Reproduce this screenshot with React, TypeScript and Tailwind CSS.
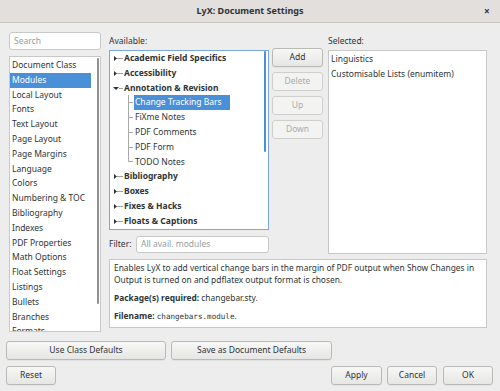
import React from "react";

const categories = [
  "Document Class",
  "Modules",
  "Local Layout",
  "Fonts",
  "Text Layout",
  "Page Layout",
  "Page Margins",
  "Language",
  "Colors",
  "Numbering & TOC",
  "Bibliography",
  "Indexes",
  "PDF Properties",
  "Math Options",
  "Float Settings",
  "Listings",
  "Bullets",
  "Branches",
  "Formats",
];

type TreeRow = { label: string; kind: "closed" | "open" | "child"; last?: boolean; selected?: boolean };

const tree: TreeRow[] = [
  { label: "Academic Field Specifics", kind: "closed" },
  { label: "Accessibility", kind: "closed" },
  { label: "Annotation & Revision", kind: "open" },
  { label: "Change Tracking Bars", kind: "child", selected: true },
  { label: "FiXme Notes", kind: "child" },
  { label: "PDF Comments", kind: "child" },
  { label: "PDF Form", kind: "child" },
  { label: "TODO Notes", kind: "child", last: true },
  { label: "Bibliography", kind: "closed" },
  { label: "Boxes", kind: "closed" },
  { label: "Fixes & Hacks", kind: "closed" },
  { label: "Floats & Captions", kind: "closed" },
];

function Btn({
  children,
  disabled,
  className = "",
}: {
  children: React.ReactNode;
  disabled?: boolean;
  className?: string;
}) {
  return (
    <div
      className={
        "flex items-center justify-center whitespace-nowrap rounded-[3px] border " +
        (disabled
          ? "border-[#cfcfcd] bg-[#f3f3f2] text-[#a9abab] "
          : "border-[#b9b9b6] bg-gradient-to-b from-[#f7f7f6] to-[#e6e6e4] text-[#2e3436] shadow-[0_1px_0_rgba(0,0,0,0.04)] ") +
        className
      }
    >
      {children}
    </div>
  );
}

function Expander({ open }: { open: boolean }) {
  return (
    <svg width="14" height="15" className="shrink-0">
      {open ? (
        <polygon points="3,6 9,6 6,9" fill="#2e3436" />
      ) : (
        <polygon points="4,5 7,7.5 4,10" fill="#2e3436" />
      )}
      <line x1={open ? 9 : 7} y1="7.5" x2="13" y2="7.5" stroke="#a0a0a0" />
    </svg>
  );
}

function Branch({ last }: { last?: boolean }) {
  return (
    <svg width="24" height="15" className="shrink-0">
      <line x1="18.5" y1="0" x2="18.5" y2={last ? 7.5 : 15} stroke="#a8a8a8" />
      <line x1="18.5" y1="7.5" x2="23" y2="7.5" stroke="#a8a8a8" />
    </svg>
  );
}

export default function App() {
  return (
    <div className="flex h-[391px] w-[500px] flex-col overflow-hidden bg-[#ededed] font-['Noto_Sans','Liberation_Sans',sans-serif] text-[8.5px] text-[#2e3436]">
      {/* title bar */}
      <div className="flex h-[23px] shrink-0 items-center border-b border-[#c9c5c0] bg-[#e2dfdc] pl-[16px] pr-[8px]">
        <div className="flex-1 text-center text-[9px] font-bold">LyX: Document Settings</div>
        <div className="w-[8px] text-[10px] font-bold leading-none">×</div>
      </div>

      <div className="flex pl-[9px] pt-[9px]">
        {/* left column */}
        <div className="flex w-[92px] flex-col gap-[6px]">
          <div className="flex h-[18px] items-center rounded-[3px] border border-[#c8c8c6] bg-white px-[4px] text-[#9a9c9c]">
            Search
          </div>
          <div className="flex h-[276px] border border-[#c8c8c6] bg-white">
            <div className="flex-1 overflow-hidden whitespace-nowrap pt-[1px]">
              {categories.map((c, i) => (
                <div
                  key={c}
                  className={
                    "flex h-[14.8px] items-center px-[2px] " +
                    (i === 1 ? "bg-[#4a90d9] text-white" : "")
                  }
                >
                  {c}
                </div>
              ))}
            </div>
            <div className="flex w-[9px] justify-end pr-[1px] pt-[1px]">
              <div className="h-[246px] w-[2px] rounded-full bg-[#8e9091]" />
            </div>
          </div>
        </div>

        {/* right area */}
        <div className="ml-[8px] flex w-[378px] flex-col">
          <div className="flex">
            {/* available */}
            <div className="flex w-[160px] flex-col">
              <div className="flex h-[18px] items-center">Available:</div>
              <div className="flex h-[180px] border border-[#7aa7dc] bg-white">
                <div className="flex-1 overflow-hidden whitespace-nowrap">
                  {tree.map((r) =>
                    r.kind === "child" ? (
                      <div key={r.label} className="flex h-[14.8px] items-center">
                        <Branch last={r.last} />
                        <div
                          className={
                            "flex h-full w-[96px] items-center px-[1px] " +
                            (r.selected ? "bg-[#4a90d9] text-white" : "")
                          }
                        >
                          {r.label}
                        </div>
                      </div>
                    ) : (
                      <div key={r.label} className="flex h-[14.8px] items-center font-bold">
                        <Expander open={r.kind === "open"} />
                        <span>{r.label}</span>
                      </div>
                    )
                  )}
                </div>
                <div className="flex w-[4px] justify-start">
                  <div className="h-[101px] w-[2px] rounded-full bg-[#4a90d9]" />
                </div>
              </div>
              <div className="mt-[6px] flex h-[17px] items-center">
                <span className="w-[27px]">Filter:</span>
                <div className="flex h-full flex-1 items-center rounded-[3px] border border-[#c8c8c6] bg-white px-[4px] text-[#9a9c9c]">
                  All avail. modules
                </div>
              </div>
            </div>

            {/* buttons */}
            <div className="ml-[3px] mt-[16px] flex w-[51px] flex-col gap-[5px]">
              <Btn className="h-[19px]">Add</Btn>
              <Btn disabled className="h-[19px]">Delete</Btn>
              <Btn disabled className="h-[19px]">Up</Btn>
              <Btn disabled className="h-[19px]">Down</Btn>
            </div>

            {/* selected */}
            <div className="ml-[5px] flex w-[159px] flex-col">
              <div className="flex h-[18px] items-center">Selected:</div>
              <div className="h-[204px] whitespace-nowrap border border-[#c8c8c6] bg-white px-[2px] pt-[1px]">
                <div className="flex h-[14.8px] items-center">Linguistics</div>
                <div className="flex h-[14.8px] items-center">Customisable Lists (enumitem)</div>
              </div>
            </div>
          </div>

          {/* description */}
          <div className="mt-[5px] h-[69px] whitespace-nowrap border border-[#c8c8c6] bg-white px-[4px] pt-[2px] text-[8.4px] leading-[12px]">
            <p className="mb-[6px]">
              Enables LyX to add vertical change bars in the margin of PDF output when Show Changes in
              <br />
              Output is turned on and pdflatex output format is chosen.
            </p>
            <p className="mb-[6px]">
              <b>Package(s) required:</b> changebar.sty.
            </p>
            <p>
              <b>Filename:</b>{" "}
              <span className="font-['DejaVu_Sans_Mono',monospace] text-[7.6px]">changebars.module</span>.
            </p>
          </div>
        </div>
      </div>

      {/* bottom buttons */}
      <div className="mt-[9px] flex gap-[5px] pl-[6px]">
        <Btn className="h-[19px] w-[160px]">Use Class Defaults</Btn>
        <Btn className="h-[19px] w-[161px]">Save as Document Defaults</Btn>
      </div>
      <div className="mt-[6px] flex items-center pl-[6px] pr-[7px]">
        <Btn className="h-[19px] w-[50px]">Reset</Btn>
        <div className="flex-1" />
        <Btn className="h-[19px] w-[51px]">Apply</Btn>
        <Btn className="ml-[5px] h-[19px] w-[50px]">Cancel</Btn>
        <Btn className="ml-[6px] h-[19px] w-[50px]">OK</Btn>
      </div>
    </div>
  );
}
